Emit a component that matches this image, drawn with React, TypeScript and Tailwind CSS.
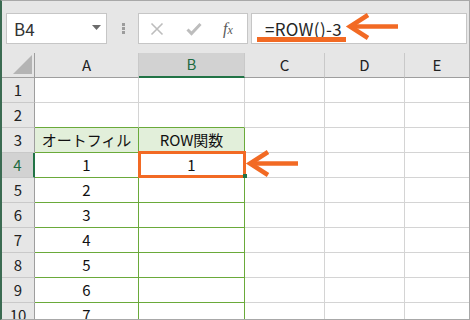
import React from 'react';

const ORANGE = '#f26a24';

type Row = { n: number; a?: string; b?: string };

const rows: Row[] = [
  { n: 1 },
  { n: 2 },
  { n: 3, a: 'オートフィル', b: 'ROW関数' },
  { n: 4, a: '1', b: '1' },
  { n: 5, a: '2' },
  { n: 6, a: '3' },
  { n: 7, a: '4' },
  { n: 8, a: '5' },
  { n: 9, a: '6' },
  { n: 10, a: '7' },
];

function Toolbar() {
  return (
    <div className="flex h-[52px] items-start bg-[#e6e6e6] pl-[4px] pt-[12px]">
      {/* name box */}
      <div className="flex h-[31px] w-[101px] items-center justify-between border border-[#c6c6c6] bg-white pl-[7px] pr-[5px]">
        <span className="text-[17px] leading-none text-[#333]">B4</span>
        <svg width="9" height="5" viewBox="0 0 9 5" className="mb-[2px]">
          <path d="M0 0 L9 0 L4.5 5 Z" fill="#6b6b6b" />
        </svg>
      </div>
      {/* separator dots */}
      <div className="ml-[15px] mt-[10px] flex w-[3px] flex-col gap-[1px]">
        <div className="h-[3px] w-[3px] bg-[#9c9c9c]" />
        <div className="h-[3px] w-[3px] bg-[#9c9c9c]" />
        <div className="h-[3px] w-[3px] bg-[#9c9c9c]" />
      </div>
      {/* buttons */}
      <div className="ml-[13px] flex h-[31px] w-[110px] items-center border border-[#c6c6c6] bg-white">
        <svg width="14" height="14" viewBox="0 0 14 14" className="ml-[11px]">
          <path d="M1.5 1.5 L12.5 12.5 M12.5 1.5 L1.5 12.5" stroke="#bdbdbd" strokeWidth="1.6" fill="none" />
        </svg>
        <svg width="16" height="14" viewBox="0 0 16 14" className="ml-[22px]">
          <path d="M1.5 7.5 L5.5 11.5 L14.5 2" stroke="#bdbdbd" strokeWidth="3" fill="none" />
        </svg>
        <span className="ml-[21px] [font-family:'Liberation_Serif',serif] text-[16px] italic leading-none text-[#5a5a5a]">
          f<span className="text-[12px]">x</span>
        </span>
      </div>
      {/* formula box */}
      <div className="ml-[3px] mr-[2px] flex h-[31px] flex-1 items-center border border-[#c6c6c6] bg-white pl-[13px]">
        <span className="text-[17px] leading-none tracking-[0.3px] text-[#262626]">=ROW()-3</span>
      </div>
    </div>
  );
}

function ColHeader({ label, selected, last }: { label: string; selected?: boolean; last?: boolean }) {
  return (
    <div
      className={
        'flex items-center justify-center text-[15px] ' +
        (last ? '' : 'border-r border-[#c9c9c9] ') +
        (selected
          ? 'bg-[#d2d2d2] text-[#1e6b41] border-b-2 border-b-[#217346]'
          : 'bg-[#e6e6e6] text-[#222] border-b border-b-[#9e9e9e]')
      }
    >
      {label}
    </div>
  );
}

function Sheet() {
  return (
    <div className="grid grid-cols-[33px_104px_106px_80px_80px_64px] auto-rows-[25px]">
      {/* corner */}
      <div className="relative border-b border-r border-[#9e9e9e] bg-[#e6e6e6]">
        <svg width="20" height="19" viewBox="0 0 20 19" className="absolute bottom-[3px] right-[1px]">
          <path d="M0 19 L19 19 L19 0 Z" fill="#b4b4b4" />
        </svg>
      </div>
      <ColHeader label="A" />
      <ColHeader label="B" selected />
      <ColHeader label="C" />
      <ColHeader label="D" />
      <ColHeader label="E" last />

      {rows.map((r) => {
        const sel = r.n === 4;
        const green = r.n >= 3;
        const greenBottom = r.n >= 2;
        const cell =
          'flex items-center justify-center text-[15px] text-[#111] border-r border-b ' +
          (green ? 'border-r-[#6aaa3a] ' : 'border-r-[#d4d4d4] ') +
          (greenBottom ? 'border-b-[#6aaa3a] ' : 'border-b-[#d4d4d4] ') +
          (r.n === 3 ? 'bg-[#e2efda]' : 'bg-white');
        return (
          <React.Fragment key={r.n}>
            <div
              className={
                'flex items-center justify-center border-b border-b-[#c9c9c9] text-[15px] ' +
                (sel
                  ? 'bg-[#d2d2d2] text-[#1e6b41] border-r-2 border-r-[#217346]'
                  : 'bg-[#e6e6e6] text-[#222] border-r border-r-[#9e9e9e]')
              }
            >
              {r.n}
            </div>
            <div className={cell}>{r.a}</div>
            <div className={cell}>{r.b}</div>
            <div className="border-b border-r border-[#d4d4d4] bg-white" />
            <div className="border-b border-r border-[#d4d4d4] bg-white" />
            <div className="border-b border-[#d4d4d4] bg-white" />
          </React.Fragment>
        );
      })}
    </div>
  );
}

function LeftArrow({ className }: { className: string }) {
  return (
    <svg width="56" height="30" viewBox="0 0 56 30" className={className}>
      <path d="M23 3 L5 14.5 L23 26" stroke={ORANGE} strokeWidth="4.5" fill="none" />
      <path d="M6 14.5 L53 14.5" stroke={ORANGE} strokeWidth="4.5" fill="none" />
    </svg>
  );
}

export default function App() {
  return (
    <div className="relative h-[320px] w-[470px] overflow-hidden border-l-2 border-t border-r border-b border-l-[#3b6b52] border-t-[#a8a8a8] border-r-[#a8a8a8] border-b-[#a8a8a8] bg-[#e6e6e6] [font-family:'Noto_Sans_CJK_JP','Noto_Sans',sans-serif]">
      <Toolbar />
      <Sheet />

      {/* formula annotation */}
      <div className="absolute left-[255px] top-[36px] h-[5px] w-[89px] bg-[#f26a24]" />
      <LeftArrow className="absolute left-[343px] top-[11px]" />

      {/* selected cell annotation */}
      <div className="absolute left-[136px] top-[150px] h-[27px] w-[108px] border-[3px] border-[#f26a24]" />
      <div className="absolute left-[241px] top-[173px] h-[4px] w-[4px] bg-[#217346]" />
      <LeftArrow className="absolute left-[243px] top-[148px]" />
    </div>
  );
}
